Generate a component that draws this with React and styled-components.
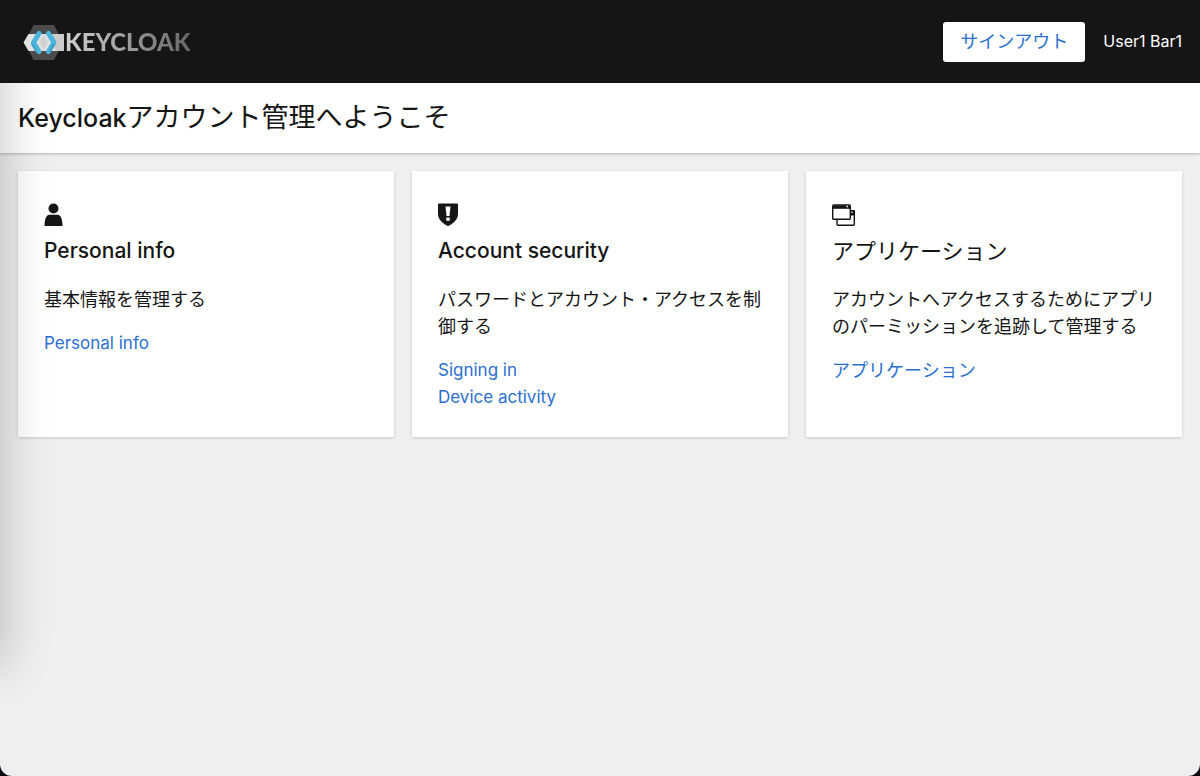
import React from "react";
import styled, { createGlobalStyle } from "styled-components";

const GlobalStyle = createGlobalStyle`
  * {
    box-sizing: border-box;
  }

  body {
    margin: 0;
    background: #06080f;
    color: #151515;
    font-family: Inter, "Noto Sans CJK JP", sans-serif;
    font-size: 18px;
    line-height: 27px;
  }
`;

const Page = styled.div`
  position: relative;
  display: flex;
  flex-direction: column;
  min-height: 100vh;
  overflow: hidden;
  background: #efefef;
  border-radius: 0 0 12px 12px;
`;

const Header = styled.header`
  display: flex;
  align-items: center;
  justify-content: space-between;
  height: 83px;
  padding: 0 18px 0 23px;
  background: #151515;
`;

const Brand = styled.a`
  display: flex;
  align-items: center;
  text-decoration: none;
`;

const Wordmark = styled.span`
  background: linear-gradient(90deg, #d0d0d0, #666666);
  background-clip: text;
  color: transparent;
  font-family: Lato, sans-serif;
  font-size: 24px;
  font-weight: 900;
`;

const Tools = styled.div`
  display: flex;
  align-items: center;
  gap: 18px;
  color: #ffffff;
`;

const UserName = styled.span`
  font-size: 16px;
`;

const SignOut = styled.button`
  height: 40px;
  padding: 0 17px;
  border: 0;
  border-radius: 3px;
  background: #ffffff;
  color: #2b6fd0;
  font: inherit;
  cursor: pointer;
`;

const Welcome = styled.section`
  padding: 17px 18px;
  background: #ffffff;
  box-shadow: 0 1px 3px rgba(0, 0, 0, 0.25);
`;

const WelcomeTitle = styled.h1`
  margin: 0;
  font-size: 27px;
  font-weight: 400;
  line-height: 36px;
`;

const Product = styled.span`
  font-size: 25px;
  font-weight: 500;
`;

const Cards = styled.main`
  display: grid;
  grid-template-columns: repeat(3, 1fr);
  gap: 18px;
  padding: 18px;
`;

const Card = styled.article`
  padding: 26px;
  background: #ffffff;
  box-shadow: 0 1px 3px rgba(0, 0, 0, 0.16);
`;

const CardIcon = styled.div`
  display: flex;
  align-items: center;
  height: 36px;
`;

const CardTitle = styled.h2`
  margin: 0;
  font-size: ${props => (props.$latin ? "21px" : "22px")};
  font-weight: ${props => (props.$latin ? 500 : 400)};
  line-height: 36px;
`;

const CardText = styled.p`
  margin: 17px 0;
`;

const CardLink = styled.a`
  display: block;
  color: #2b6fd0;
  font-size: ${props => (props.$latin ? "17px" : "18px")};
  text-decoration: none;
`;

// Collapsed sidebar, parked off the left edge with only its shadow showing
const Sidebar = styled.aside`
  position: absolute;
  top: -60px;
  bottom: 112px;
  right: 100%;
  width: 300px;
  box-shadow: 4px 0 44px 2px rgba(0, 0, 0, 0.2);
`;

const SidebarClip = styled.div`
  position: absolute;
  top: 83px;
  bottom: 0;
  left: 0;
  width: 80px;
  overflow: hidden;
  pointer-events: none;
`;

const Logo = () => (
  <svg width="42" height="37" viewBox="0 0 42 37" aria-hidden="true">
    <path d="M10.500 2h20.500l9 17.500-9 17.500H10.500L2 19.500z" fill="#4b4b4b" />
    <path d="M5.500 11H41v17H5.500L0.500 19.500z" fill="#e2e2e2" />
    <path d="M26 11h15v17H33z" fill="#cbcbcb" />
    <path d="M20.500 12l4.500 7.500-4.500 7.500-4-7.500z" fill="#d2d2d2" />
    <path
      d="M16 10.500L10.500 19.500l5.500 9M25.500 10.500l5.500 9-5.500 9"
      fill="none"
      stroke="#4bb4dd"
      strokeWidth="5"
      strokeLinecap="round"
      strokeLinejoin="round"
    />
    <path
      d="M8.500 20.500l5 8.500M31.500 20.500l-5 8.500"
      fill="none"
      stroke="#3a9bc6"
      strokeWidth="1.500"
    />
  </svg>
);

const UserIcon = () => (
  <svg width="19" height="24" viewBox="0 0 19 24" aria-hidden="true">
    <circle cx="9.500" cy="5.500" r="5" fill="#151515" />
    <path d="M.5 23C.5 16 2.500 11.800 5.500 11.800h8c3 0 5 4.200 5 11.200z" fill="#151515" />
  </svg>
);

const ShieldIcon = () => (
  <svg width="20" height="24" viewBox="0 0 20 24" aria-hidden="true">
    <path d="M1 .5h18q1 0 1 1v9.500c0 5.500-5 10-10 12C5 21 0 16.500 0 11V1.500q0-1 1-1z" fill="#151515" />
    <path d="M7.500 3.500h5l-1 9.500h-3zM8.300 14.500h3.400v3.300H8.300z" fill="#ffffff" />
  </svg>
);

const AppsIcon = () => (
  <svg width="23" height="24" viewBox="0 0 23 24" aria-hidden="true">
    <path d="M5 17v4.300q0 1 1 1h15.300q1 0 1-1V8h-4" fill="none" stroke="#151515" strokeWidth="1.400" />
    <path d="M18 7h4q1 0 1 1v4.500h-5z" fill="#151515" />
    <path d="M19.300 8.500h1.200V10h-1.200z" fill="#ffffff" />
    <rect x="0.700" y="1.900" width="17.600" height="14.400" rx="1" fill="#ffffff" stroke="#151515" strokeWidth="1.400" />
    <path d="M1 2.200h17v3.600H1z" fill="#151515" />
    <path d="M14.500 2.800H16v1.500h-1.500z" fill="#ffffff" />
  </svg>
);

const cards = [
  {
    title: "Personal info",
    latin: true,
    text: "基本情報を管理する",
    icon: UserIcon,
    links: [{ label: "Personal info", to: "#/personal-info", latin: true }]
  },
  {
    title: "Account security",
    latin: true,
    text: "パスワードとアカウント・アクセスを制御する",
    icon: ShieldIcon,
    links: [
      { label: "Signing in", to: "#/security/signingin", latin: true },
      { label: "Device activity", to: "#/security/device-activity", latin: true }
    ]
  },
  {
    title: "アプリケーション",
    text: "アカウントへアクセスするためにアプリのパーミッションを追跡して管理する",
    icon: AppsIcon,
    links: [{ label: "アプリケーション", to: "#/applications" }]
  }
];

const App = () => {
  return (
    <React.Fragment>
      <GlobalStyle />
      <Page lang="ja">
        <Header>
          <Brand href="#/">
            <Logo />
            <Wordmark>KEYCLOAK</Wordmark>
          </Brand>
          <Tools>
            <SignOut type="button">サインアウト</SignOut>
            <UserName>User1 Bar1</UserName>
          </Tools>
        </Header>
        <Welcome>
          <WelcomeTitle>
            <Product>Keycloak</Product>アカウント管理へようこそ
          </WelcomeTitle>
        </Welcome>
        <Cards>
          {cards.map(({ title, latin, text, icon: Icon, links }) => (
            <Card key={title}>
              <CardIcon>
                <Icon />
              </CardIcon>
              <CardTitle $latin={latin}>{title}</CardTitle>
              <CardText>{text}</CardText>
              {links.map(link => (
                <CardLink key={link.to} href={link.to} $latin={link.latin}>
                  {link.label}
                </CardLink>
              ))}
            </Card>
          ))}
        </Cards>
        <SidebarClip>
          <Sidebar />
        </SidebarClip>
      </Page>
    </React.Fragment>
  );
};

export default App;
